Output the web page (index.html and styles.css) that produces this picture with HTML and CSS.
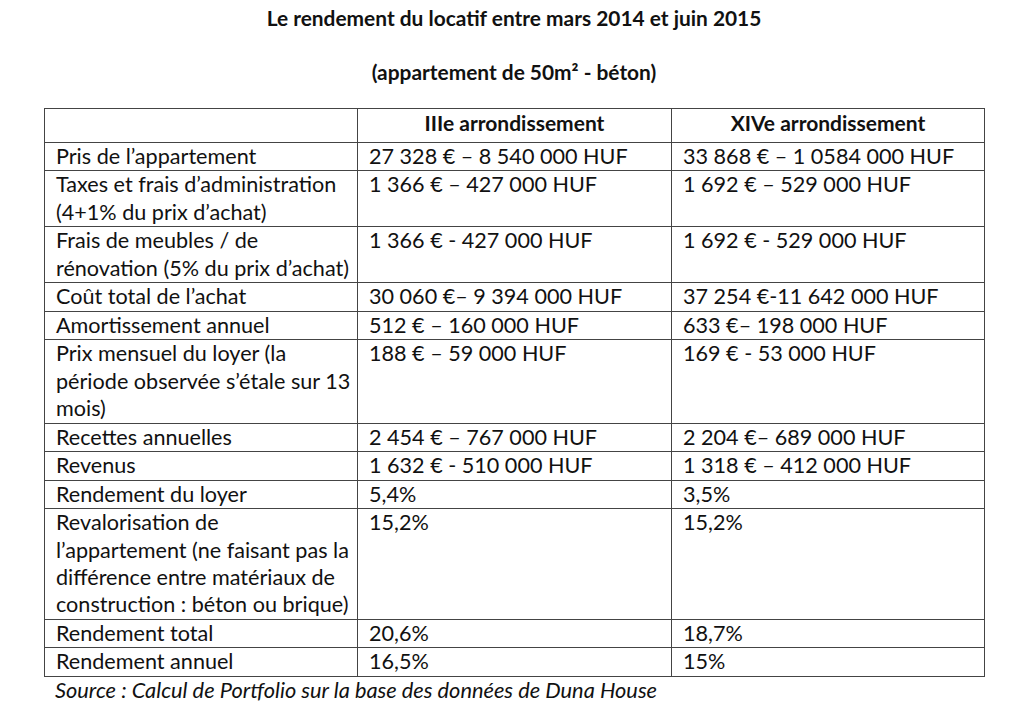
FILE: index.html
```html
<!DOCTYPE html>
<html lang="fr">
<head>
<meta charset="utf-8">
<title>Le rendement du locatif</title>
<link rel="stylesheet" href="styles.css">
</head>
<body>
<div class="page">
  <p class="title">Le rendement du locatif entre mars 2014 et juin 2015</p>
  <p class="subtitle">(appartement de 50m² - béton)</p>
  <table class="data">
    <colgroup><col class="c1"><col class="c2"><col class="c3"></colgroup>
    <thead>
      <tr><th></th><th>IIIe arrondissement</th><th>XIVe arrondissement</th></tr>
    </thead>
    <tbody>
      <tr><td>Pris de l’appartement</td><td>27 328 € – 8 540 000 HUF</td><td>33 868 € – 1 0584 000 HUF</td></tr>
      <tr><td>Taxes et frais d’administration<br>(4+1% du prix d’achat)</td><td>1 366 € – 427 000 HUF</td><td>1 692 € – 529 000 HUF</td></tr>
      <tr><td>Frais de meubles / de<br>rénovation (5% du prix d’achat)</td><td>1 366 € - 427 000 HUF</td><td>1 692 € - 529 000 HUF</td></tr>
      <tr><td>Coût total de l’achat</td><td>30 060 €– 9 394 000 HUF</td><td>37 254 €-11 642 000 HUF</td></tr>
      <tr><td>Amortissement annuel</td><td>512 € – 160 000 HUF</td><td>633 €– 198 000 HUF</td></tr>
      <tr><td>Prix mensuel du loyer (la<br>période observée s’étale sur 13<br>mois)</td><td>188 € – 59 000 HUF</td><td>169 € - 53 000 HUF</td></tr>
      <tr><td>Recettes annuelles</td><td>2 454 € – 767 000 HUF</td><td>2 204 €– 689 000 HUF</td></tr>
      <tr><td>Revenus</td><td>1 632 € - 510 000 HUF</td><td>1 318 € – 412 000 HUF</td></tr>
      <tr><td>Rendement du loyer</td><td>5,4%</td><td>3,5%</td></tr>
      <tr><td>Revalorisation de<br>l’appartement (ne faisant pas la<br>différence entre matériaux de<br>construction : béton ou brique)</td><td>15,2%</td><td>15,2%</td></tr>
      <tr><td>Rendement total</td><td>20,6%</td><td>18,7%</td></tr>
      <tr><td>Rendement annuel</td><td>16,5%</td><td>15%</td></tr>
    </tbody>
  </table>
  <p class="source">Source : Calcul de Portfolio sur la base des données de Duna House</p>
</div>
</body>
</html>
```
FILE: styles.css
```css
html, body {
  margin: 0;
  padding: 0;
  background: #ffffff;
}
body {
  font-family: "Lato", "Liberation Sans", sans-serif;
  color: #111111;
  font-size: 21.6px;
}
.page {
  width: 1024px;
  height: 722px;
  overflow: hidden;
  padding: 0 0 0 44px;
  box-sizing: border-box;
}
.title, .subtitle {
  margin: 0;
  width: 940px;
  text-align: center;
  font-weight: bold;
  font-size: 20.9px;
  line-height: 27px;
}
.title {
  padding-top: 4px;
}
.subtitle {
  padding-top: 27.4px;
  margin-bottom: 22.6px;
}
.data {
  border-collapse: collapse;
  table-layout: fixed;
  width: 940px;
}
.c1 { width: 313px; }
.c2 { width: 314px; }
.c3 { width: 313px; }
.data th, .data td {
  border: 1px solid #444444;
  vertical-align: top;
  text-align: left;
  padding: 0 10px 0 11px;
  line-height: 27.47px;
  font-weight: normal;
  white-space: nowrap;
}
.data th {
  font-weight: bold;
  font-size: 21px;
  text-align: center;
  padding: 0 0 5.5px;
}
.source {
  margin: 0 0 0 11px;
  font-style: italic;
  font-size: 21.8px;
  line-height: 25px;
}
```
